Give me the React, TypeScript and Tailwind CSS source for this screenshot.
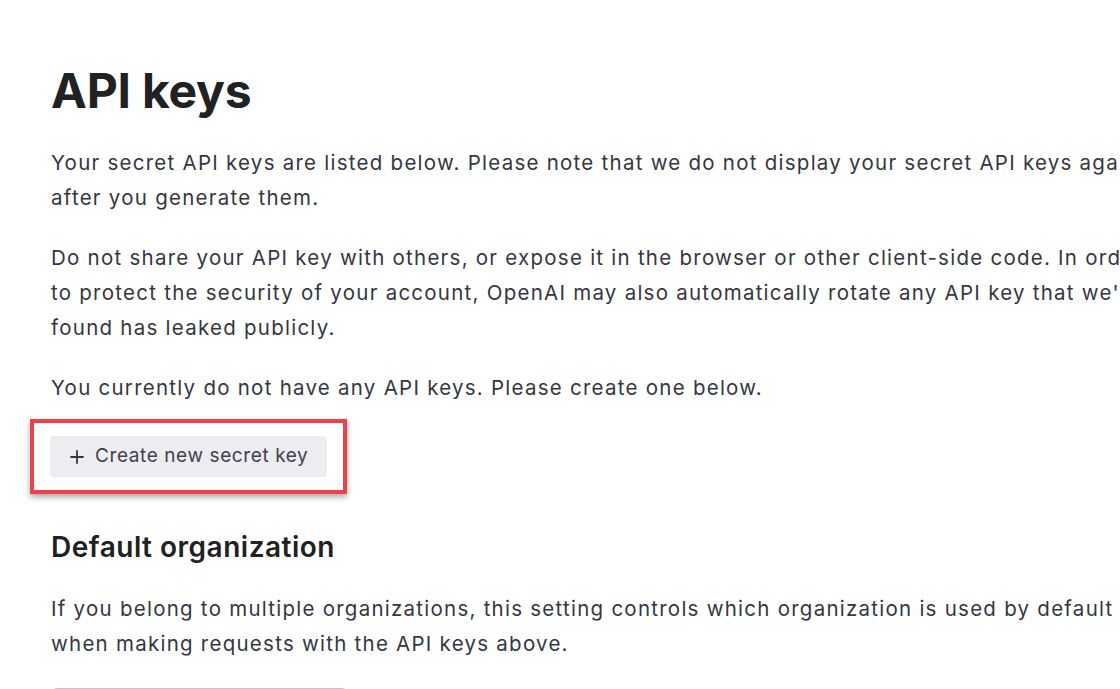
const lines1 = [
    "Your secret API keys are listed below. Please note that we do not display your secret API keys again",
    "after you generate them.",
];

const lines2 = [
    "Do not share your API key with others, or expose it in the browser or other client-side code. In order",
    "to protect the security of your account, OpenAI may also automatically rotate any API key that we've",
    "found has leaked publicly.",
];

const lines3 = [
    "If you belong to multiple organizations, this setting controls which organization is used by default",
    "when making requests with the API keys above.",
];

const Para = ({ lines, className }: { lines: string[]; className?: string }) => (
    <p className={"whitespace-nowrap text-[20.5px] leading-[35px] tracking-[1.25px] text-[#353740] " + (className ?? "")}>
        {lines.map((l, i) => (
            <span key={i} className="block">
                {l}
            </span>
        ))}
    </p>
);

export default function App() {
    return (
        <div className="h-[689px] w-[1120px] overflow-hidden bg-white font-['Inter','Liberation_Sans',sans-serif]">
            <div className="pl-[51px] pt-[62px]">
                <h1 className="text-[48px] font-bold leading-[58px] tracking-[-0.2px] text-[#202123]">
                    API keys
                </h1>
                <Para lines={lines1} className="mt-[25px]" />
                <Para lines={lines2} className="mt-[25px]" />
                <p className="mt-[25px] whitespace-nowrap text-[20.5px] leading-[35px] tracking-[1.25px] text-[#353740]">
                    You currently do not have any API keys. Please create one below.
                </p>
                <div className="-ml-[21px] mt-[14px] w-fit border-[4px] border-[#ee4148] px-[16px] py-[13px] shadow-[0_3px_6px_rgba(0,0,0,0.35)]">
                    <button className="flex h-[41px] items-center gap-[11px] rounded-[4px] bg-[#ececf1] pl-[20px] pr-[19px] text-[19px] tracking-[0.6px] text-[#40414f]">
                        <svg width="14" height="14" viewBox="0 0 14 14" fill="none" stroke="#353740" strokeWidth="1.8" strokeLinecap="round">
                            <path d="M7 1v12M1 7h12" />
                        </svg>
                        Create new secret key
                    </button>
                </div>
                <h2 className="mt-[35px] text-[28px] font-semibold leading-[36px] tracking-[0.5px] text-[#202123]">
                    Default organization
                </h2>
                <Para lines={lines3} className="mt-[26px]" />
                <div className="mt-[27px] h-[40px] w-[297px] rounded-[6px] border border-[#c5c5d2]" />
            </div>
        </div>
    );
}
